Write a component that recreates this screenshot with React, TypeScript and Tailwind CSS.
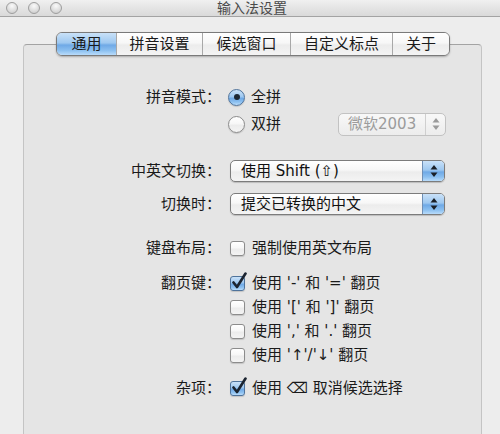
import React from "react";

const aquaBg =
  "bg-[linear-gradient(to_bottom,#c9e1f8_0%,#9ec8f0_45%,#6fa9e6_55%,#8cc0f0_80%,#b9dcfb_100%)]";
const whiteBg =
  "bg-[linear-gradient(to_bottom,#ffffff_0%,#f7f7f7_45%,#ececec_55%,#f4f4f4_100%)]";

function Radio({ checked }: { checked?: boolean }) {
  return (
    <div
      className={`w-[17px] h-[17px] rounded-full border flex items-center justify-center shadow-[0_1px_1px_rgba(0,0,0,0.15)] ${
        checked ? `border-[#4f739b] ${aquaBg}` : `border-[#8c8c8c] ${whiteBg}`
      }`}
    >
      {checked && <div className="w-[6px] h-[6px] rounded-full bg-[#1c2733]" />}
    </div>
  );
}

function Check({ checked }: { checked?: boolean }) {
  return (
    <div className="relative w-[15px] h-[15px] ml-[2px]">
      <div
        className={`w-[15px] h-[15px] rounded-[3px] border shadow-[0_1px_1px_rgba(0,0,0,0.15)] ${
          checked ? `border-[#4f739b] ${aquaBg}` : `border-[#8c8c8c] ${whiteBg}`
        }`}
      />
      {checked && (
        <svg
          className="absolute left-[1px] top-[-4px]"
          width="17"
          height="18"
          viewBox="0 0 17 18"
        >
          <path
            d="M2.5 10.5 L6 15 L14.5 1.5"
            fill="none"
            stroke="#1b2430"
            strokeWidth="2.6"
            strokeLinecap="round"
            strokeLinejoin="round"
          />
        </svg>
      )}
    </div>
  );
}

function Arrows({ color }: { color: string }) {
  return (
    <svg width="8" height="14" viewBox="0 0 8 14">
      <path d="M4 1 L7.5 5.5 L0.5 5.5 Z" fill={color} />
      <path d="M4 13 L7.5 8.5 L0.5 8.5 Z" fill={color} />
    </svg>
  );
}

function Popup({ text }: { text: string }) {
  return (
    <div
      className={`ml-[2px] w-[215px] h-[22px] rounded-[5px] border border-[#7c7c7c] flex overflow-hidden shadow-[0_1px_1px_rgba(0,0,0,0.18)] ${whiteBg}`}
    >
      <div className="flex-1 pl-[10px] flex items-center text-[15px] text-[#111] leading-none">
        {text}
      </div>
      <div
        className={`w-[22px] h-full border-l border-[#6f8fb5] flex items-center justify-center ${aquaBg}`}
      >
        <Arrows color="#1a1f26" />
      </div>
    </div>
  );
}

function Row({
  label,
  children,
  className = "",
}: {
  label?: string;
  children: React.ReactNode;
  className?: string;
}) {
  return (
    <div className={`flex items-center h-[24px] ${className}`}>
      <div className="w-[197px] shrink-0 text-right text-[15px] text-[#1a1a1a] leading-none">
        {label ? `${label}：` : ""}
      </div>
      <div className="ml-[7px] flex items-center w-[218px]">{children}</div>
    </div>
  );
}

function CheckRow({
  label,
  text,
  checked,
  className = "",
}: {
  label?: string;
  text: React.ReactNode;
  checked?: boolean;
  className?: string;
}) {
  return (
    <Row label={label} className={className}>
      <Check checked={checked} />
      <span className="ml-[7px] text-[15px] text-[#1a1a1a] leading-none whitespace-nowrap">{text}</span>
    </Row>
  );
}

const tabs = [
  { t: "通用", w: "w-[59px]" },
  { t: "拼音设置", w: "w-[86px]" },
  { t: "候选窗口", w: "w-[88px]" },
  { t: "自定义标点", w: "w-[102px]" },
  { t: "关于", w: "w-[57px]" },
];

export default function App() {
  return (
    <div className="w-[500px] h-[434px] overflow-hidden bg-[#ededed] font-[family-name:'DejaVu_Sans','Noto_Sans_CJK_SC',sans-serif] text-[#1a1a1a]">
      {/* title bar */}
      <div className="relative h-[17px] bg-[linear-gradient(to_bottom,#f0f0f0,#d9d9d9)] border-b border-[#a3a3a3] flex items-center">
        <div className="flex items-center gap-[10px] pl-[6px]">
          {[0, 1, 2].map((i) => (
            <div
              key={i}
              className="w-[12px] h-[12px] rounded-full border border-[#9e9e9e] bg-[radial-gradient(circle_at_50%_30%,#fafafa_0%,#dedede_55%,#c4c4c4_100%)]"
            />
          ))}
        </div>
        <div className="absolute inset-0 flex items-center justify-center pl-[4px] text-[14px] text-[#4a4a4a] leading-none">
          输入法设置
        </div>
      </div>

      {/* body */}
      <div className="pl-[23px] pr-[18px] pt-[15px]">
        <div className="relative z-10 flex justify-center pl-[1px]">
          <div className="flex h-[24px] rounded-[6px] border border-[#7a7a7a] overflow-hidden shadow-[0_1px_2px_rgba(0,0,0,0.25)]">
            {tabs.map((tab, i) => (
              <div
                key={tab.t}
                className={`${tab.w} h-full flex items-center justify-center text-[15px] leading-none ${
                  i > 0 ? "border-l border-[#a8a8a8]" : ""
                } ${i === 0 ? aquaBg : whiteBg}`}
              >
                {tab.t}
              </div>
            ))}
          </div>
        </div>

        <div className="-mt-[12px] h-[420px] rounded-[4px] border border-[#c4c4c4] border-t-[#a3a3a3] bg-[#e5e5e5] pt-[40px]">
          <Row label="拼音模式">
            <Radio checked />
            <span className="ml-[6px] text-[15px] leading-none">全拼</span>
          </Row>
          <Row className="mt-[3px]">
            <Radio />
            <span className="ml-[6px] text-[15px] leading-none">双拼</span>
            <div className="ml-auto w-[108px] h-[23px] rounded-[5px] border border-[#c2c2c2] bg-[linear-gradient(to_bottom,#f8f8f8,#ececec)] flex items-center">
              <span className="flex-1 pl-[9px] text-[15px] text-[#9c9c9c] leading-none">
                微软2003
              </span>
              <div className="w-[20px] h-full border-l border-[#cfcfcf] flex items-center justify-center">
                <Arrows color="#9a9a9a" />
              </div>
            </div>
          </Row>
          <Row label="中英文切换" className="mt-[23px]">
            <Popup text="使用 Shift (⇧)" />
          </Row>
          <Row label="切换时" className="mt-[9px]">
            <Popup text="提交已转换的中文" />
          </Row>
          <CheckRow label="键盘布局" text="强制使用英文布局" className="mt-[20px]" />
          <CheckRow label="翻页键" text="使用 '-' 和 '=' 翻页" checked className="mt-[11px]" />
          <CheckRow text="使用 '[' 和 ']' 翻页" />
          <CheckRow text="使用 ',' 和 '.' 翻页" />
          <CheckRow text="使用 '↑'/'↓' 翻页" />
          <CheckRow label="杂项" text="使用 ⌫ 取消候选选择" checked className="mt-[9px]" />
        </div>
      </div>
    </div>
  );
}
